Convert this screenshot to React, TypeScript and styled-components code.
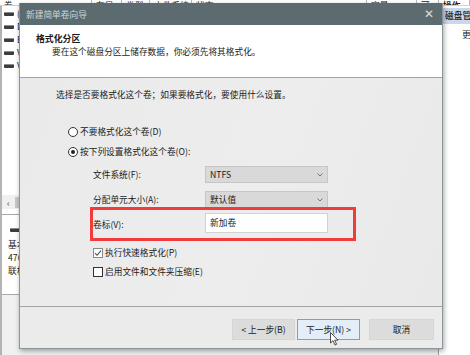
import styled, { createGlobalStyle } from "styled-components";

const GlobalStyle = createGlobalStyle`
  html, body {
    margin: 0;
    padding: 0;
    background: #ffffff;
  }
  body {
    font-family: "Noto Sans CJK SC", "Noto Sans", "Liberation Sans", sans-serif;
    color: #1a1a1a;
  }
`;

const Screen = styled.div`
  position: relative;
  width: 470px;
  height: 355px;
  overflow: hidden;
  background: #ffffff;
  font-size: 8.7px;
`;

/* ---------- background: disk management window ---------- */

const Desktop = styled.div`
  display: flex;
  flex-direction: column;
  height: 100%;
`;

const HeaderStrip = styled.div`
  display: flex;
  align-items: flex-end;
  height: 5px;
  overflow: hidden;
  border-bottom: 1px solid #d0d0d0;
  background: #ffffff;
`;

const HeaderCell = styled.div<{ $w: number; $bold?: boolean }>`
  width: ${(p) => p.$w}px;
  flex-shrink: 0;
  line-height: 12px;
  margin-bottom: -7px;
  padding-left: 4px;
  box-sizing: border-box;
  border-right: 1px solid #b8b8b8;
  font-weight: ${(p) => (p.$bold ? 700 : 400)};
  white-space: nowrap;
  overflow: hidden;
`;

const Main = styled.div`
  display: flex;
  flex: 1;
  min-height: 0;
`;

const LeftPane = styled.div`
  flex: 1;
  display: flex;
  flex-direction: column;
  border-left: 2px solid #b4b4b4;
`;

const VolumeList = styled.div`
  height: 189px;
  padding-top: 1px;
  box-sizing: border-box;
`;

const VolumeRow = styled.div`
  display: flex;
  align-items: center;
  gap: 3px;
  height: 13px;
  padding-left: 2px;
  line-height: 13px;
`;

const DriveIcon = styled.span`
  display: inline-block;
  width: 10px;
  height: 4px;
  border-radius: 1px;
  background: #3c3c3c;
  border-top: 1px solid #8c8c8c;
  box-sizing: border-box;
`;

const HScroll = styled.div`
  display: flex;
  align-items: center;
  height: 14px;
  background: #f0f0f0;
  padding-left: 5px;
  gap: 5px;
  color: #444;
`;

const ScrollThumb = styled.div`
  width: 90px;
  height: 11px;
  background: #c8c8c8;
`;

const DiskPanel = styled.div`
  margin-top: 5px;
  border-top: 1px solid #a8a8a8;
  height: 80px;
  padding: 9px 0 0 6px;
  box-sizing: border-box;
  display: flex;
  flex-direction: column;
  gap: 1px;
  line-height: 12px;
`;

const DiskIconRow = styled.div`
  height: 12px;
  display: flex;
  align-items: center;
  padding-left: 2px;
  margin-bottom: 2px;
`;

const LowerArea = styled.div`
  flex: 1;
  border-top: 1px solid #a8a8a8;
  background: #f0f0f0;
`;

const RightPane = styled.div`
  width: 31px;
  flex-shrink: 0;
  border-left: 1px solid #a0a0a0;
  display: flex;
  flex-direction: column;
  padding-top: 2px;
`;

const ActionHeader = styled.div<{ $active?: boolean; $indent?: number }>`
  height: 16px;
  line-height: 16px;
  padding-left: ${(p) => p.$indent ?? 6}px;
  white-space: nowrap;
  overflow: hidden;
  background: ${(p) => (p.$active ? "#c9d8ea" : "transparent")};
  font-weight: ${(p) => (p.$active ? 500 : 400)};
  color: #1a1a1a;
  margin-bottom: 3px;
`;

/* ---------- wizard dialog ---------- */

const Dialog = styled.div`
  position: absolute;
  left: 19px;
  top: 3px;
  width: 424px;
  height: 346px;
  display: flex;
  flex-direction: column;
  border: 1px solid #8a9699;
  border-top: none;
  box-sizing: border-box;
  box-shadow: 1px 2px 5px rgba(0, 0, 0, 0.35);
  background: #ebebeb;
`;

const TitleBar = styled.div`
  display: flex;
  align-items: center;
  justify-content: space-between;
  height: 22px;
  flex-shrink: 0;
  background: #5c6b6f;
  color: #cfd6d8;
  padding: 0 8px 0 6px;
`;

const CloseGlyph = styled.span`
  font-size: 12px;
  line-height: 12px;
  color: #d8dee0;
  font-family: "DejaVu Sans", sans-serif;
  font-weight: 300;
`;

const WizardHeader = styled.div`
  height: 53px;
  flex-shrink: 0;
  background: #ffffff;
  border-bottom: 1px solid #a3a3a3;
  padding: 8px 0 0 16px;
  box-sizing: border-box;
  line-height: 12px;
`;

const HeaderTitle = styled.div`
  font-weight: 700;
  font-size: 8.9px;
  margin-bottom: 1px;
`;

const HeaderSub = styled.div`
  padding-left: 16px;
`;

const Body = styled.div`
  position: relative;
  flex: 1;
  background: linear-gradient(110deg, #eaeaea 0%, #ededed 55%, #e9e9e9 100%);
  padding: 11px 0 0 36px;
  box-sizing: border-box;
  line-height: 12px;
`;

const Intro = styled.div`
  margin-bottom: 24px;
`;

const OptionRow = styled.label<{ $indent: number; $gap?: number }>`
  display: flex;
  align-items: center;
  height: 14px;
  padding-left: ${(p) => p.$indent}px;
  margin-bottom: ${(p) => p.$gap ?? 0}px;
  gap: 2px;
`;

const Radio = styled.span<{ $checked?: boolean }>`
  position: relative;
  width: 10px;
  height: 10px;
  border-radius: 50%;
  border: 1px solid #333;
  box-sizing: border-box;
  background: #ffffff;
  &::after {
    content: "";
    display: ${(p) => (p.$checked ? "block" : "none")};
    position: absolute;
    left: 2px;
    top: 2px;
    width: 4px;
    height: 4px;
    border-radius: 50%;
    background: #222;
  }
`;

const Checkbox = styled.span<{ $checked?: boolean }>`
  display: inline-flex;
  align-items: center;
  justify-content: center;
  width: 10px;
  height: 10px;
  border: 1px solid ${(p) => (p.$checked ? "#8a8a8a" : "#333")};
  box-sizing: border-box;
  background: #ffffff;
`;

const FormGrid = styled.div`
  display: grid;
  grid-template-columns: 112px 123px;
  row-gap: 8px;
  padding-left: 37px;
  margin-top: 7px;
  align-items: center;
`;

const FieldLabel = styled.div`
  line-height: 12px;
`;

const Select = styled.div`
  display: flex;
  align-items: center;
  justify-content: space-between;
  height: 17px;
  padding: 0 4px;
  box-sizing: border-box;
  background: #d9d9d9;
  border: 1px solid #c6c6c6;
`;

const TextBox = styled.div`
  display: flex;
  align-items: center;
  height: 20px;
  margin-top: -3px;
  padding: 0 4px;
  box-sizing: border-box;
  background: #ffffff;
  border: 1px solid #d2d2d2;
`;

const Checks = styled.div`
  margin-top: 13px;
  display: flex;
  flex-direction: column;
  gap: 5px;
`;

const Highlight = styled.div`
  position: absolute;
  left: 70px;
  top: 129px;
  width: 266px;
  height: 34px;
  border: 3px solid #f23b3b;
  box-sizing: border-box;
  pointer-events: none;
`;

const Footer = styled.div`
  height: 42px;
  flex-shrink: 0;
  border-top: 1px solid #a3a3a3;
  display: flex;
  align-items: center;
  justify-content: flex-end;
  padding: 4px 8px 0 0;
  box-sizing: border-box;
  gap: 9px;
`;

const ButtonPair = styled.div`
  display: flex;
  gap: 2px;
`;

const Button = styled.div<{ $focus?: boolean; $w?: number }>`
  width: ${(p) => p.$w ?? 63}px;
  height: 21px;
  display: flex;
  align-items: center;
  justify-content: center;
  box-sizing: border-box;
  background: ${(p) => (p.$focus ? "#e3eef9" : "#dcdcdc")};
  border: 1px solid ${(p) => (p.$focus ? "#6aa6de" : "#d6d6d6")};
  color: #1a1a1a;
  white-space: nowrap;
`;

const Pointer = styled.svg`
  position: absolute;
  left: 330px;
  top: 332px;
`;

const Chevron = () => (
  <svg width="6" height="4" viewBox="0 0 6 4">
    <path d="M0.5 0.5 L3 3 L5.5 0.5" fill="none" stroke="#6a6a6a" strokeWidth="0.9" />
  </svg>
);

const Tick = () => (
  <svg width="8" height="8" viewBox="0 0 8 8">
    <path d="M1 4.2 L3.1 6.3 L7 1.6" fill="none" stroke="#4a4a4a" strokeWidth="1.1" />
  </svg>
);

const volumes = ["(C:)", "DATA (D:)", "E (E:)", "Vol1", "Vol2"];

const App = () => {
  return (
    <Screen>
      <GlobalStyle />
      <Desktop>
        <HeaderStrip>
          <HeaderCell $w={92}>卷</HeaderCell>
          <HeaderCell $w={30}>布局</HeaderCell>
          <HeaderCell $w={28}>类型</HeaderCell>
          <HeaderCell $w={42}>文件系统</HeaderCell>
          <HeaderCell $w={175}>状态</HeaderCell>
          <HeaderCell $w={50}>容量</HeaderCell>
          <HeaderCell $w={22}>可</HeaderCell>
          <HeaderCell $w={31} $bold>操作</HeaderCell>
        </HeaderStrip>
        <Main>
          <LeftPane>
            <VolumeList>
              {volumes.map((v) => (
                <VolumeRow key={v}>
                  <DriveIcon />
                  <span>{v}</span>
                </VolumeRow>
              ))}
            </VolumeList>
            <HScroll>
              <span>‹</span>
              <ScrollThumb />
            </HScroll>
            <DiskPanel>
              <DiskIconRow>
                <DriveIcon />
              </DiskIconRow>
              <div>基本</div>
              <div>476.92 GB</div>
              <div>联机</div>
            </DiskPanel>
            <LowerArea />
          </LeftPane>
          <RightPane>
            <ActionHeader $active>磁盘管理</ActionHeader>
            <ActionHeader $indent={23}>更多操作</ActionHeader>
          </RightPane>
        </Main>
      </Desktop>

      <Dialog>
        <TitleBar>
          <span>新建简单卷向导</span>
          <CloseGlyph>✕</CloseGlyph>
        </TitleBar>
        <WizardHeader>
          <HeaderTitle>格式化分区</HeaderTitle>
          <HeaderSub>要在这个磁盘分区上储存数据，你必须先将其格式化。</HeaderSub>
        </WizardHeader>
        <Body>
          <Intro>选择是否要格式化这个卷；如果要格式化，要使用什么设置。</Intro>
          <OptionRow $indent={12} $gap={6}>
            <Radio />
            <span>不要格式化这个卷(D)</span>
          </OptionRow>
          <OptionRow $indent={12}>
            <Radio $checked />
            <span>按下列设置格式化这个卷(O):</span>
          </OptionRow>
          <FormGrid>
            <FieldLabel>文件系统(F):</FieldLabel>
            <Select>
              <span>NTFS</span>
              <Chevron />
            </Select>
            <FieldLabel>分配单元大小(A):</FieldLabel>
            <Select>
              <span>默认值</span>
              <Chevron />
            </Select>
            <FieldLabel>卷标(V):</FieldLabel>
            <TextBox>新加卷</TextBox>
          </FormGrid>
          <Checks>
            <OptionRow $indent={37}>
              <Checkbox $checked>
                <Tick />
              </Checkbox>
              <span>执行快速格式化(P)</span>
            </OptionRow>
            <OptionRow $indent={37}>
              <Checkbox />
              <span>启用文件和文件夹压缩(E)</span>
            </OptionRow>
          </Checks>
          <Highlight />
        </Body>
        <Footer>
          <ButtonPair>
            <Button>&lt; 上一步(B)</Button>
            <Button $focus>下一步(N) &gt;</Button>
          </ButtonPair>
          <Button $w={65}>取消</Button>
        </Footer>
      </Dialog>

      <Pointer width="9" height="14" viewBox="0 0 9 14">
        <path
          d="M0.5 0.5 L0.5 11 L3 8.7 L5 13 L6.6 12.3 L4.7 8.2 L8 8.2 Z"
          fill="#ffffff"
          stroke="#222"
          strokeWidth="0.8"
          strokeLinejoin="round"
        />
      </Pointer>
    </Screen>
  );
};

export default App;
